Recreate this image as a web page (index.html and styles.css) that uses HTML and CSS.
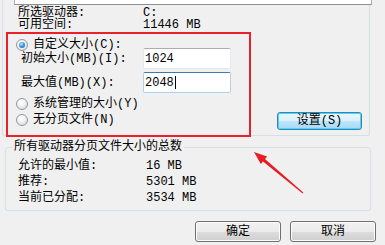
FILE: index.html
```html
<html>
<head>
	<meta charset="UTF-8">
	<title>虚拟内存</title>
	<link rel="stylesheet" href="styles.css">
</head>
<body>
	<div class="dialog">
		<div class="drive-group">
			<div class="list-edge"></div>
			<div class="info">
				<div class="row"><span class="lbl">所选驱动器:</span><span>C:</span></div>
				<div class="row"><span class="lbl">可用空间:</span><span>11446 MB</span></div>
			</div>
			<div class="opt first"><span class="radio on"></span>自定义大小(C):</div>
			<div class="fields">
				<div class="field-row"><span class="flbl">初始大小(MB)(I):</span><span class="field">1024</span></div>
				<div class="field-row"><span class="flbl">最大值(MB)(X):</span><span class="field focus">2048<i class="caret"></i></span></div>
			</div>
			<div class="lower">
				<div class="opts">
					<div class="opt"><span class="radio"></span>系统管理的大小(Y)</div>
					<div class="opt"><span class="radio"></span>无分页文件(N)</div>
				</div>
				<button class="btn default">设置(S)</button>
			</div>
		</div>
		<fieldset class="totals">
			<legend>所有驱动器分页文件大小的总数</legend>
			<div class="row"><span class="lbl">允许的最小值:</span><span>16 MB</span></div>
			<div class="row"><span class="lbl">推荐:</span><span>5301 MB</span></div>
			<div class="row"><span class="lbl">当前已分配:</span><span>3534 MB</span></div>
		</fieldset>
		<div class="actions">
			<button class="btn">确定</button>
			<button class="btn">取消</button>
		</div>
		<!-- 标注 -->
		<div class="mark"></div>
		<svg class="arrow" width="385" height="245" viewBox="0 0 385 245">
			<polygon fill="#e81c24" points="254,152 267.2,156.5 265,159.1 303.3,192.6 302.7,193.4 263,161.5 260.8,164.1"/>
		</svg>
	</div>
</body>
</html>
```

FILE: styles.css
```css
	*{
		margin: 0;
		padding: 0;
		box-sizing: border-box;
	}
	body {
		background: #f0f0f0;
		font-family: "Liberation Mono", "Noto Sans CJK SC", monospace;
		font-size: 12px;
		line-height: 12px;
		color: #000;
	}
	.dialog {
		position: relative;
		width: 385px;
		height: 245px;
		overflow: hidden;
	}
	.drive-group {
		margin-left: 2px;
		width: 368px;
		border: 1px solid #d5dfe5;
		border-top: none;
		border-radius: 0 0 3px 3px;
		padding-bottom: 5px;
	}
	.list-edge {
		margin-left: 11px;
		width: 358px;
		height: 5px;
		border: 1px solid #abadb3;
		border-top: none;
		border-bottom-color: #8f8f8f;
		background: #fff;
	}
	.info {
		margin-top: 2px;
	}
	.row {
		display: flex;
		height: 12px;
		padding-left: 15px;
	}
	.row .lbl {
		width: 125px;
	}
	.opt {
		display: flex;
		align-items: center;
		height: 16px;
		padding-left: 13px;
		gap: 5px;
	}
	.opt.first {
		height: 12px;
		margin-top: 8px;
	}
	.radio {
		width: 12px;
		height: 12px;
		border-radius: 50%;
		border: 1px solid #8f9aa3;
		background: radial-gradient(circle at 40% 35%, #fff 0, #f2f2f2 40%, #d0d4d8 100%);
		display: flex;
		align-items: center;
		justify-content: center;
	}
	.radio.on::after {
		content: "";
		width: 6px;
		height: 6px;
		border-radius: 50%;
		background: radial-gradient(circle at 40% 35%, #c4ecff 0, #3d9be6 45%, #10509e 100%);
	}
	.fields {
		margin-top: -3px;
		display: flex;
		flex-direction: column;
		gap: 3px;
	}
	.field-row {
		display: flex;
		align-items: center;
		height: 21px;
		padding-left: 18px;
	}
	.flbl {
		width: 122px;
	}
	.field {
		display: flex;
		align-items: center;
		width: 88px;
		height: 21px;
		padding-left: 1px;
		background: #fff;
		border: 1px solid #e3e9ef;
		border-top-color: #abadb3;
		border-radius: 2px;
	}
	.field.focus {
		border-color: #b5cfe7;
		border-top-color: #3d7bad;
	}
	.caret {
		display: inline-block;
		width: 1px;
		height: 13px;
		margin-left: 1px;
		background: #000;
	}
	.lower {
		display: flex;
		justify-content: space-between;
		height: 34px;
		margin-top: 3px;
		padding-right: 7px;
	}
	.btn {
		height: 18px;
		width: 85px;
		font: inherit;
		font-size: 12px;
		color: #000;
		border: 1px solid #707070;
		border-radius: 3px;
		background: linear-gradient(#f2f2f2 0, #ebebeb 50%, #dddddd 50%, #cfcfcf 100%);
		box-shadow: inset 0 0 0 1px #fcfcfc;
	}
	.btn.default {
		align-self: flex-end;
		border-color: #3c7fb1;
		box-shadow: inset 0 0 0 1px #48d8fb;
		background: linear-gradient(#eaf6fd 0, #d9f0fc 50%, #bee6fd 50%, #a7d9f5 100%);
	}
	.totals {
		margin: 5px 0 0 5px;
		width: 366px;
		border: 1px solid #d5dfe5;
		border-radius: 3px;
		padding: 5px 0 4px 6px;
	}
	.totals legend {
		padding: 0 2px;
		height: 12px;
	}
	.totals .row {
		height: 16px;
		align-items: center;
		padding-left: 6px;
	}
	.totals .row .lbl {
		width: 128px;
	}
	.actions {
		display: flex;
		justify-content: flex-end;
		gap: 9px;
		margin-top: 10px;
		padding-right: 9px;
	}
	.actions .btn {
		width: 86px;
		height: 21px;
	}
	.mark {
		position: absolute;
		left: 6px;
		top: 32px;
		width: 245px;
		height: 105px;
		border: 2px solid #e8212a;
	}
	.arrow {
		position: absolute;
		left: 0;
		top: 0;
		pointer-events: none;
	}
```
